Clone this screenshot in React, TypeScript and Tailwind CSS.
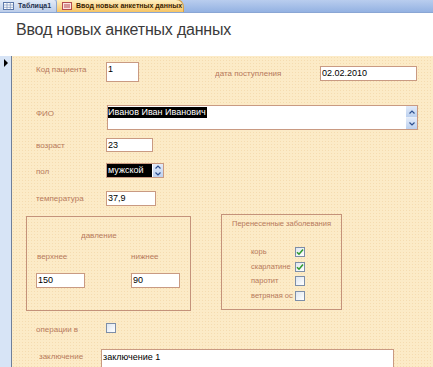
import React from "react";

const label = "text-[8px] leading-[10px] text-[#b77a5c] whitespace-nowrap overflow-hidden";
const field =
  "bg-white border border-[#c99a82] text-[9px] leading-[12px] text-black px-[1px] whitespace-nowrap overflow-hidden";

const CheckBox = ({ checked }: { checked?: boolean }) => (
  <div className="w-[10px] h-[10px] border border-[#7d8ea8] bg-gradient-to-br from-[#dfe6ef] to-white flex items-center justify-center shrink-0">
    {checked && (
      <svg width="8" height="8" viewBox="0 0 8 8">
        <path d="M1 4.2 L3 6.2 L7 1.6" stroke="#2f9a2f" strokeWidth="1.6" fill="none" />
      </svg>
    )}
  </div>
);

const Arrow = ({ up }: { up?: boolean }) => (
  <svg width="6" height="4" viewBox="0 0 6 4">
    <path d={up ? "M0.5 3.5 L3 1 L5.5 3.5" : "M0.5 0.5 L3 3 L5.5 0.5"} stroke="#2d4f8f" strokeWidth="1.2" fill="none" />
  </svg>
);

const DiseaseRow = ({ name, checked }: { name: string; checked?: boolean }) => (
  <div className="flex items-center h-[14.5px]">
    <div className="w-[44px] text-[7.5px] leading-[10px] text-[#b77a5c] whitespace-nowrap">{name}</div>
    <CheckBox checked={checked} />
  </div>
);

const TabBar = () => (
  <div className="h-[13px] bg-gradient-to-b from-[#b9cdee] to-[#94b2e2] flex items-end border-b border-[#8aa6d4]">
    <div className="h-[12px] w-[57px] flex items-center gap-[4px] px-[3px] bg-gradient-to-b from-[#e3ebf7] to-[#bccde9] border-r border-[#8ea6cc] rounded-tr-[3px]">
      <svg width="11" height="8" viewBox="0 0 11 8">
        <rect x="0.5" y="0.5" width="10" height="7" fill="#fff" stroke="#5a76a8" />
        <path d="M0.5 3 H10.5 M0.5 5.3 H10.5 M4 0.5 V7.5 M7.3 0.5 V7.5" stroke="#7d93bb" strokeWidth="0.7" />
      </svg>
      <span className="text-[7px] leading-[8px] font-bold text-[#1e2f4d]">Таблица1</span>
    </div>
    <div className="h-[13px] w-[127px] flex items-center gap-[4px] pl-[5px] bg-gradient-to-b from-[#fff0c2] to-[#f6c462] border-r border-t border-[#d7a24a] rounded-tr-[8px]">
      <svg width="10" height="8" viewBox="0 0 10 8">
        <rect x="0.5" y="0.5" width="9" height="7" fill="#fbe1e1" stroke="#b64c4c" />
        <rect x="2" y="2.5" width="6" height="1" fill="#b64c4c" />
        <rect x="2" y="4.5" width="6" height="1" fill="#b64c4c" />
      </svg>
      <span className="text-[7px] leading-[8px] font-bold text-[#3a2300] whitespace-nowrap">Ввод новых анкетных данных</span>
    </div>
  </div>
);

export default function App() {
  return (
    <div className="w-[433px] h-[367px] overflow-hidden bg-white font-['Liberation_Sans',Arial,sans-serif]">
      <TabBar />
      <div className="h-[43px] pl-[16px] pt-[7px]">
        <h1 className="text-[16px] leading-[20px] tracking-[-0.2px] text-[#3b3b3b]">Ввод новых анкетных данных</h1>
      </div>
      <div className="flex h-[311px]">
        <div className="w-[12px] shrink-0 bg-[#d7e4f6] border-r border-[#6f7f99] pt-[3px] pl-[4px]">
          <div className="w-0 h-0 border-y-[4px] border-y-transparent border-l-[4px] border-l-black" />
        </div>
        <div className="flex-1 bg-[#fcebc7] bg-[radial-gradient(#f5dcb0_0.5px,transparent_0.7px)] bg-[size:3px_3px]">
          {/* row 1 */}
          <div className="flex items-start mt-[6px] pl-[24px]">
            <div className={`${label} w-[70px] pt-[3px]`}>Код пациента</div>
            <div className={`${field} w-[33px] h-[20px]`}>1</div>
            <div className={`${label} w-[105px] ml-[76px] mt-[7px]`}>дата поступления</div>
            <div className={`${field} w-[97px] h-[15px] mt-[4px]`}>02.02.2010</div>
          </div>
          {/* ФИО */}
          <div className="flex items-start mt-[23px] pl-[24px]">
            <div className={`${label} w-[71px] pt-[4px]`}>ФИО</div>
            <div className="w-[311px] h-[25px] bg-white border border-[#c99a82] flex">
              <div className="flex-1 pt-[1px] leading-none">
                <div className="bg-black text-white text-[9px] leading-[11px] w-fit pr-[1px]">Иванов Иван Иванович</div>
              </div>
              <div className="w-[11px] flex flex-col gap-[1px] bg-[#e9eef7]">
                <div className="flex-1 bg-gradient-to-b from-[#e2ebf9] to-[#bcd0ef] flex items-center justify-center">
                  <Arrow up />
                </div>
                <div className="flex-1 bg-gradient-to-b from-[#e2ebf9] to-[#bcd0ef] flex items-center justify-center">
                  <Arrow />
                </div>
              </div>
            </div>
          </div>
          {/* возраст */}
          <div className="flex items-start mt-[8px] pl-[24px]">
            <div className={`${label} w-[70px] pt-[3px]`}>возраст</div>
            <div className={`${field} w-[47px] h-[14px]`}>23</div>
          </div>
          {/* пол */}
          <div className="flex items-start mt-[11px] pl-[24px]">
            <div className={`${label} w-[70px] pt-[4px]`}>пол</div>
            <div className="w-[58px] h-[15px] border border-[#c99a82] bg-white flex">
              <div className="w-[45px] bg-black text-white text-[9px] leading-[13px] px-[1px]">мужской</div>
              <div className="flex-1 ml-[1px] flex flex-col bg-gradient-to-b from-[#e2ebf9] to-[#bcd0ef]">
                <div className="flex-1 flex items-center justify-center"><Arrow up /></div>
                <div className="flex-1 flex items-center justify-center"><Arrow /></div>
              </div>
            </div>
          </div>
          {/* температура */}
          <div className="flex items-start mt-[13px] pl-[24px]">
            <div className={`${label} w-[70px] pt-[3px]`}>температура</div>
            <div className={`${field} w-[50px] h-[15px]`}>37,9</div>
          </div>
          {/* groups */}
          <div className="flex items-start mt-[8px] pl-[14px]">
            <div className="w-[165px] h-[95px] mt-[2px] border border-[#c4927a] pl-[9px] pt-[14px]">
              <div className={`${label} ml-[45px]`}>давление</div>
              <div className="flex mt-[11px]">
                <div className={`${label} w-[95px] pl-[1px]`}>верхнее</div>
                <div className={label}>нижнее</div>
              </div>
              <div className="flex mt-[11px]">
                <div className={`${field} w-[49px] h-[15px]`}>150</div>
                <div className={`${field} w-[49px] h-[15px] ml-[46px]`}>90</div>
              </div>
            </div>
            <div className="w-[121px] h-[96px] ml-[30px] border border-[#c4927a] pt-[4px]">
              <div className="pl-[10px] text-[7.5px] leading-[10px] text-[#b77a5c] whitespace-nowrap">Перенесенные заболевания</div>
              <div className="mt-[16px] pl-[29px]">
                <DiseaseRow name="корь" checked />
                <DiseaseRow name="скарлатине" checked />
                <DiseaseRow name="паротит" />
                <DiseaseRow name="ветряная ос" />
              </div>
            </div>
          </div>
          {/* операции */}
          <div className="flex items-center mt-[10px] pl-[24px]">
            <div className={`${label} w-[70px] pt-[4px]`}>операции в</div>
            <CheckBox />
          </div>
          {/* заключение */}
          <div className="flex items-start mt-[14px] pl-[27px]">
            <div className={`${label} w-[62px] pt-[3px]`}>заключение</div>
            <div className={`${field} w-[293px] h-[40px] pt-[1px]`}>заключение 1</div>
          </div>
        </div>
      </div>
    </div>
  );
}
